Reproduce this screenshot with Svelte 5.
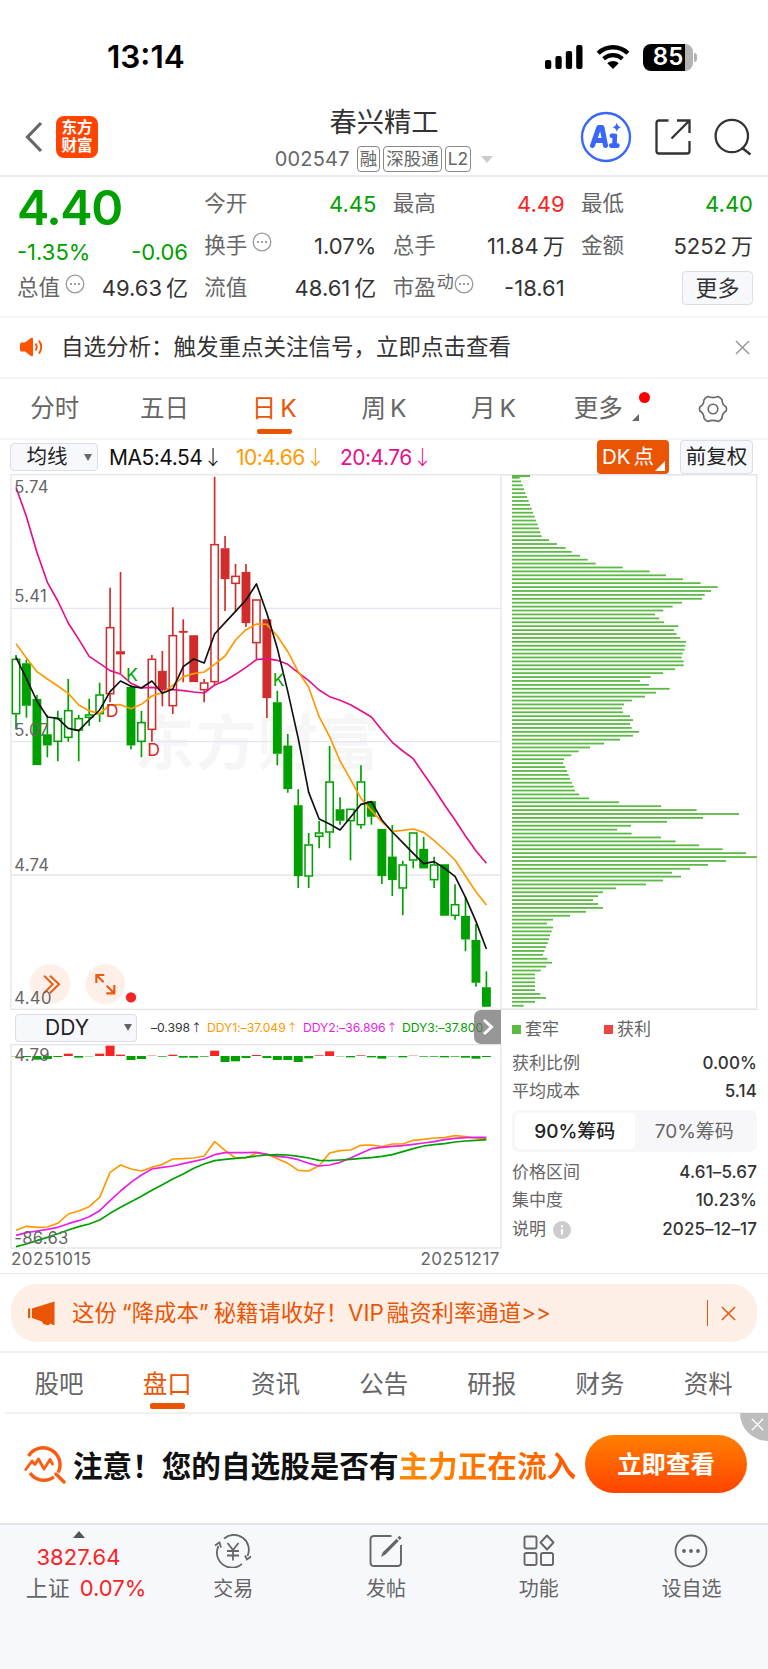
<script lang="ts">
  type Quote = { label: string; value: string; unit?: string; tone?: string; dots?: boolean; sup?: string };

  const quoteColumns: Quote[][] = [
    [
      { label: '今开', value: '4.45', tone: 'down' },
      { label: '换手', value: '1.07%', dots: true },
      { label: '流值', value: '48.61', unit: '亿' }
    ],
    [
      { label: '最高', value: '4.49', tone: 'up' },
      { label: '总手', value: '11.84', unit: '万' },
      { label: '市盈', value: '-18.61', dots: true, sup: '动' }
    ],
    [
      { label: '最低', value: '4.40', tone: 'down' },
      { label: '金额', value: '5252', unit: '万' }
    ]
  ];

  const periods = ['分时', '五日', '日K', '周K', '月K'];
  const sections = ['股吧', '盘口', '资讯', '公告', '研报', '财务', '资料'];

  // Chart units are thirds of a pixel: [high, body top, body bottom, low, type]
  // type: g = green, r = red, h = hollow, f = filled
  type Candle = [number, number, number, number, string];
  const candles: Candle[] = [
    [555, 566, 733, 778, 'gh'], [568, 580, 707, 743, 'gf'], [675, 687, 885, 885, 'gf'],
    [735, 793, 826, 862, 'gf'], [722, 744, 816, 874, 'gh'], [627, 720, 804, 815, 'gh'],
    [735, 744, 782, 874, 'gh'], [686, 733, 744, 768, 'gh'], [638, 673, 733, 756, 'gh'],
    [353, 471, 673, 697, 'rh'], [306, 544, 553, 610, 'rf'], [645, 651, 826, 838, 'gf'],
    [722, 756, 816, 862, 'gh'], [555, 566, 780, 815, 'rh'], [543, 603, 660, 709, 'rf'],
    [412, 495, 709, 732, 'rh'], [448, 483, 484, 637, 'rf'], [496, 496, 636, 636, 'rf'],
    [627, 637, 661, 697, 'rh'], [20, 222, 637, 645, 'rh'], [198, 235, 327, 423, 'rf'],
    [282, 317, 342, 423, 'rh'], [282, 306, 459, 471, 'rf'], [388, 388, 520, 568, 'rh'],
    [448, 448, 684, 744, 'rf'], [662, 697, 851, 886, 'gf'], [792, 827, 957, 968, 'gf'],
    [958, 1006, 1218, 1254, 'gf'], [1089, 1123, 1220, 1254, 'gh'], [1053, 1087, 1101, 1135, 'gh'],
    [828, 934, 1088, 1135, 'gh'], [982, 1018, 1052, 1064, 'gf'], [1016, 1016, 1054, 1171, 'gh'],
    [886, 934, 1066, 1076, 'gh'], [994, 994, 1040, 1064, 'gf'], [1077, 1077, 1218, 1242, 'gf'],
    [1065, 1160, 1230, 1278, 'gf'], [1172, 1183, 1256, 1336, 'gh'], [1087, 1087, 1172, 1195, 'gh'],
    [1101, 1137, 1195, 1195, 'gf'], [1160, 1183, 1231, 1254, 'gh'], [1183, 1183, 1337, 1337, 'gf'],
    [1243, 1302, 1338, 1349, 'gh'], [1280, 1338, 1408, 1444, 'gf'], [1362, 1410, 1538, 1550, 'gf'],
    [1504, 1552, 1610, 1610, 'gf']
  ];

  const ma5 = [562, 626, 693, 741, 745, 775, 782, 750, 720, 665, 633, 649, 654, 633, 670, 657, 590, 567, 579, 492, 458, 424, 390, 342, 430, 535, 665, 805, 967, 1047, 1062, 1080, 1042, 1003, 995, 1050, 1086, 1118, 1150, 1181, 1175, 1195, 1219, 1282, 1354, 1437];
  const ma10 = [521, 564, 605, 627, 648, 670, 705, 722, 731, 705, 704, 716, 703, 678, 668, 646, 620, 611, 606, 583, 558, 510, 479, 462, 463, 498, 545, 605, 652, 740, 800, 873, 928, 985, 1021, 1056, 1084, 1081, 1077, 1087, 1112, 1140, 1170, 1218, 1265, 1305];
  const ma20 = [52, 140, 247, 337, 393, 459, 508, 559, 580, 602, 612, 640, 654, 652, 657, 659, 662, 666, 669, 645, 632, 613, 592, 569, 566, 571, 583, 608, 632, 660, 680, 691, 704, 722, 741, 780, 817, 843, 866, 912, 957, 1005, 1050, 1098, 1142, 1180];

  const ddyBars = [-1, -3, -11, -9, -3, 7, -5, -1, 7, 31, 4, -12, -9, 1, -2, 4, -5, -5, -2, 16, -18, -16, -6, 3, -6, -12, -12, -18, -7, 2, 14, -1, -4, 2, -4, -8, -1, -4, 1, -2, -2, -4, -2, -5, -8, -3];
  const ddy1 = [661, 649, 652, 651, 640, 612, 603, 590, 562, 487, 465, 477, 483, 472, 463, 447, 446, 444, 438, 395, 421, 444, 444, 429, 433, 446, 460, 481, 483, 467, 429, 422, 420, 406, 405, 410, 402, 402, 391, 388, 384, 383, 377, 380, 384, 385];
  const ddy2 = [676, 668, 663, 658, 652, 641, 632, 620, 602, 572, 543, 517, 495, 477, 472, 468, 461, 454, 447, 434, 428, 428, 428, 427, 433, 439, 442, 449, 460, 468, 465, 457, 444, 430, 416, 412, 409, 407, 403, 399, 395, 389, 385, 383, 382, 382];
  const ddy3 = [710, 702, 692, 682, 671, 660, 650, 642, 630, 610, 592, 575, 559, 541, 524, 507, 492, 475, 462, 452, 448, 445, 442, 438, 435, 434, 435, 439, 444, 451, 452, 450, 448, 445, 443, 439, 434, 425, 416, 408, 404, 401, 396, 393, 391, 389];

  // Right end of each chip-distribution bar, top price first
  const chips = [
    63, 68, 72, 76, 81, 86, 90, 95, 99, 104, 108, 113, 117, 121, 125, 147, 171, 197, 215, 240, 263, 287, 368, 449,
    498, 549, 602, 653, 633, 614, 606, 546, 518, 490, 465, 478, 492, 535, 522, 530, 541, 558, 556, 554, 548, 545,
    551, 551, 525, 489, 452, 420, 447, 509, 468, 435, 396, 372, 366, 369, 390, 399, 390, 395, 417, 399, 360, 312,
    270, 236, 214, 192, 189, 196, 201, 206, 210, 216, 221, 225, 238, 267, 357, 483, 590, 717, 609, 501, 393, 351,
    395, 483, 527, 597, 668, 738, 771, 678, 624, 570, 516, 543, 489, 438, 348, 309, 294, 279, 294, 309, 258, 210,
    159, 141, 159, 155, 150, 147, 143, 138, 133, 129, 142, 156, 138, 122, 105, 105, 105, 105, 105, 121, 138, 105, 71
  ];
  const chipStep = (1607 - 34) / (chips.length - 1);

  const xAt = (i: number) => 48 + i * 31.36;
  const toPoints = (ys: number[]) => ys.map((y, i) => `${xAt(i).toFixed(1)},${y}`).join(' ');
  const candleColor = (type: string) => (type[0] === 'g' ? '#00a000' : '#d12c2c');
</script>

{#snippet dots()}
  <svg class="dots" viewBox="0 0 20 20" width="20" height="20">
    <circle cx="10" cy="10" r="8.8" fill="none" stroke="#999" stroke-width="1.3" />
    <circle cx="6" cy="10" r="1.1" fill="#888" />
    <circle cx="10" cy="10" r="1.1" fill="#888" />
    <circle cx="14" cy="10" r="1.1" fill="#888" />
  </svg>
{/snippet}

{#snippet cross(size: number, color: string)}
  <svg viewBox="0 0 16 16" width={size} height={size}>
    <path d="M1 1L15 15M15 1L1 15" stroke={color} stroke-width="1.6" fill="none" />
  </svg>
{/snippet}

<div class="page">
  <div class="status">
    <span class="time">13:14</span>
    <div class="signals">
      <svg width="38" height="24" viewBox="0 0 38 24">
        <rect x="0" y="15" width="6.3" height="9" rx="2" />
        <rect x="10.4" y="11" width="6.3" height="13" rx="2" />
        <rect x="20.8" y="6" width="6.3" height="18" rx="2" />
        <rect x="31.2" y="0" width="6.3" height="24" rx="2" />
      </svg>
      <svg class="wifi" width="34" height="24" viewBox="0 0 34 24">
        <path d="M2.2 8.2C10.4 .2 23.6 .2 31.8 8.2" fill="none" stroke="#000" stroke-width="4.4" />
        <path d="M7.6 13.8C13 8.8 21 8.8 26.4 13.8" fill="none" stroke="#000" stroke-width="4.2" />
        <path d="M11.3 18.2C14.5 15.3 19.5 15.3 22.7 18.2L17 24Z" />
      </svg>
      <div class="battery"><span>85</span></div>
      <div class="nub"></div>
    </div>
  </div>

  <header>
    <div class="header-left">
      <svg width="18" height="32" viewBox="0 0 18 32">
        <path d="M16 2L2.5 16L16 30" fill="none" stroke="#666" stroke-width="3.2" />
      </svg>
      <div class="logo"><span>东方</span><span>财富</span></div>
    </div>
    <div class="title">
      <h1>春兴精工</h1>
      <div class="code">
        <span class="number">002547</span>
        <span class="tag">融</span>
        <span class="tag">深股通</span>
        <span class="tag">L2</span>
        <svg width="12" height="7" viewBox="0 0 12 7"><path d="M0 0H12L6 7Z" fill="#ccc" /></svg>
      </div>
    </div>
    <div class="header-right">
      <svg width="52" height="52" viewBox="0 0 52 52">
        <circle cx="26" cy="26" r="24" fill="none" stroke="#3a66fb" stroke-width="2.4" />
        <path d="M12.5 34.5L18.8 16.5H22L25.5 34.5M15.5 29.5H24" fill="none" stroke="#3a66fb" stroke-width="5" stroke-linejoin="round" stroke-linecap="round" />
        <path d="M34.8 25.5L34.4 34.5M31.8 24.7H35M31.2 34.6H37.5" fill="none" stroke="#3a66fb" stroke-width="4.6" stroke-linecap="round" />
        <path d="M36.8 11.5Q37.4 15.6 41.4 16.2Q37.4 16.8 36.8 21Q36.2 16.8 32.2 16.2Q36.2 15.6 36.8 11.5Z" fill="#3a66fb" />
      </svg>
      <svg width="36" height="36" viewBox="0 0 36 36">
        <path d="M13.5 1.5H4Q1.5 1.5 1.5 4V32Q1.5 34.5 4 34.5H32Q34.5 34.5 34.5 32V22M22 1.5H34.5V14M34 2L16.5 19.5" fill="none" stroke="#333" stroke-width="2.3" />
      </svg>
      <svg width="38" height="38" viewBox="0 0 38 38">
        <circle cx="17.8" cy="18" r="16.2" fill="none" stroke="#333" stroke-width="2.3" />
        <path d="M27.5 29.5L36.5 36.5" stroke="#333" stroke-width="2.4" />
      </svg>
    </div>
  </header>

  <section class="quote">
    <div class="price">
      <div class="latest">4.40</div>
      <div class="change"><span>-1.35%</span><span>-0.06</span></div>
      <div class="cell short">
        <span class="label">总值{@render dots()}</span>
        <span>49.63<span class="unit">亿</span></span>
      </div>
    </div>
    {#each quoteColumns as column}
      <div class="column">
        {#each column as item}
          <div class="cell">
            <span class="label">
              {item.label}{#if item.sup}<sup>{item.sup}</sup>{/if}{#if item.dots}{@render dots()}{/if}
            </span>
            <span class={item.tone}>{item.value}{#if item.unit}<span class="unit">{item.unit}</span>{/if}</span>
          </div>
        {/each}
        {#if column.length < 3}
          <div class="cell last"><button class="more">更多</button></div>
        {/if}
      </div>
    {/each}
  </section>

  <section class="notice">
    <svg width="24" height="20" viewBox="0 0 24 20">
      <path d="M0 7Q0 5.5 1.5 5.5H5L11 1Q13 0 13 2V18Q13 20 11 19L5 14.5H1.5Q0 14.5 0 13Z" fill="#ff5200" />
      <path d="M15.5 6.5Q18 10 15.5 13.5M19 3.5Q23.5 10 19 16.5" fill="none" stroke="#ff5200" stroke-width="1.9" />
    </svg>
    <p>自选分析：触发重点关注信号，立即点击查看</p>
    {@render cross(15, '#999')}
  </section>

  <nav class="periods">
    {#each periods as period}
      <div class="period" class:active={period === '日K'}>
        {period[0]}<span class:latin={period[1] === 'K'}>{period[1]}</span>
      </div>
    {/each}
    <div class="period with-dot">
      更多
      <svg class="corner" width="7" height="7" viewBox="0 0 7 7"><path d="M7 0V7H0Z" fill="#666" /></svg>
      <i class="badge"></i>
    </div>
    <div class="period gear">
      <svg width="30" height="28" viewBox="0 0 30 28">
        <path d="M9.8 1.6Q15 3.6 20.2 1.6Q22.4 2.6 24 4.8Q24.2 10 28.2 12Q28.9 14 28.2 16Q24.2 18 24 23.2Q22.4 25.4 20.2 26.4Q15 24.4 9.8 26.4Q7.6 25.4 6 23.2Q5.8 18 1.8 16Q1.1 14 1.8 12Q5.8 10 6 4.8Q7.6 2.6 9.8 1.6Z" fill="none" stroke="#666" stroke-width="1.6" />
        <circle cx="15" cy="14" r="4.8" fill="none" stroke="#666" stroke-width="1.6" />
      </svg>
    </div>
  </nav>

  <div class="ma-bar">
    <div class="select ma-select"><span>均线</span><i class="caret"></i></div>
    <span class="ma ma5">MA5:4.54<em>↓</em></span>
    <span class="ma ma10">10:4.66<em>↓</em></span>
    <span class="ma ma20">20:4.76<em>↓</em></span>
    <div class="dk">DK<b>点</b><i></i></div>
    <div class="select adjust">前复权</div>
  </div>

  <main>
    <div class="left">
      <svg class="kline" width="492" height="536" viewBox="30 12 1476 1608">
        <text class="watermark" x="402" y="886">东方财富</text>
        <path d="M33 415H1503M33 815H1503M33 1215H1503" stroke="#e4e5f0" stroke-width="4" />
        <rect x="33" y="14" width="1470" height="1604" fill="none" stroke="#e6e6ea" stroke-width="4" />
        {#each candles as [high, top, bottom, low, type], i}
          {@const color = candleColor(type)}
          <path d="M{xAt(i)} {high}V{top}M{xAt(i)} {bottom}V{low}" stroke={color} stroke-width="5" />
          <rect
            x={xAt(i) - 11}
            y={top + 2}
            width="22"
            height={Math.max(bottom - top - 4, 1)}
            fill={type[1] === 'f' ? color : '#fff'}
            stroke={color}
            stroke-width="4.6"
          />
        {/each}
        <polyline points={toPoints(ma20)} stroke="#e5108a" />
        <polyline points={toPoints(ma10)} stroke="#ff9900" />
        <polyline points={toPoints(ma5)} stroke="#111" />
        <g class="signal">
          <text x="396" y="634" fill="#00a000">K</text>
          <text x="836" y="649" fill="#00a000">K</text>
          <text x="336" y="742" fill="#d12c2c">D</text>
          <text x="461" y="858" fill="#d12c2c">D</text>
        </g>
        <circle cx="150" cy="1542" r="60" fill="#fef0e9" />
        <circle cx="316" cy="1542" r="60" fill="#fef0e9" />
        <path d="M132 1517L158 1543L132 1569M150 1517L177 1543L150 1569" fill="none" stroke="#ee5a10" stroke-width="6" />
        <path d="M289 1539V1515H313M290 1516L311 1537M343 1545V1570H319M342 1569L320 1547" fill="none" stroke="#ee5a10" stroke-width="6.5" />
        <circle cx="393" cy="1582" r="15.5" fill="#f82424" />
        <g class="axis">
          <text x="43" y="68">5.74</text>
          <text x="43" y="396">5.41</text>
          <text x="43" y="797">5.07</text>
          <text x="43" y="1202">4.74</text>
          <text x="43" y="1602">4.40</text>
        </g>
      </svg>

      <div class="ddy-bar">
        <div class="select ddy-select"><span>DDY</span><i class="caret"></i></div>
        <span class="v0">–0.398<em>↑</em></span>
        <span class="v1">DDY1:–37.049<em>↑</em></span>
        <span class="v2">DDY2:–36.896<em>↑</em></span>
        <span class="v3">DDY3:–37.800</span>
        <button class="next" aria-label="下一项">
          <svg width="12" height="18" viewBox="0 0 12 18"><path d="M2 2L9.5 9L2 16" fill="none" stroke="#fff" stroke-width="3" /></svg>
        </button>
      </div>

      <svg class="ddy" width="492" height="205" viewBox="30 102 1476 615">
        <rect x="33" y="104" width="1470" height="610" fill="none" stroke="#e4e4e8" stroke-width="4" />
        {#each ddyBars as value, i}
          <rect
            x={xAt(i) - 13.5}
            y={value > 0 ? 138 - value : 138}
            width="27"
            height={Math.abs(value)}
            fill={value > 0 ? '#f82424' : '#00a000'}
          />
        {/each}
        <polyline points={toPoints(ddy1)} stroke="#ff9900" />
        <polyline points={toPoints(ddy2)} stroke="#e91eea" />
        <polyline points={toPoints(ddy3)} stroke="#00a000" />
        <g class="axis">
          <text x="43" y="154">4.79</text>
          <text x="43" y="702">-86.63</text>
        </g>
      </svg>
      <div class="dates"><span>20251015</span><span>20251217</span></div>
    </div>

    <aside>
      <svg class="chips" width="258" height="536" viewBox="0 12 774 1608">
        <path d="M0 14H770V1618H0" fill="none" stroke="#e4e4ea" stroke-width="4.5" />
        <rect x="36" y="15" width="54" height="6" fill="#5bba43" />
        <rect x="36" y="21" width="23" height="5" fill="#5bba43" />
        {#each chips as end, i}
          <rect x="36" y={31.5 + i * chipStep} width={end - 36} height="5.4" fill="#5bba43" />
        {/each}
      </svg>
      <div class="info">
        <div class="legend">
          <span><i class="lock"></i>套牢</span>
          <span><i class="gain"></i>获利</span>
        </div>
        <div class="info-row"><span>获利比例</span><b>0.00%</b></div>
        <div class="info-row"><span>平均成本</span><b>5.14</b></div>
        <div class="toggle">
          <div class="on">90%筹码</div>
          <div>70%筹码</div>
        </div>
        <div class="info-row"><span>价格区间</span><b>4.61–5.67</b></div>
        <div class="info-row"><span>集中度</span><b>10.23%</b></div>
        <div class="info-row tall">
          <span>说明
            <svg width="18" height="18" viewBox="0 0 18 18">
              <circle cx="9" cy="9" r="9" fill="#ccc" />
              <path d="M9 8V13.5M9 4.2V6.4" stroke="#fff" stroke-width="2.2" />
            </svg>
          </span>
          <b>2025–12–17</b>
        </div>
      </div>
    </aside>
  </main>

  <section class="promo">
    <div class="pill">
      <svg width="28" height="25" viewBox="0 0 28 25">
        <path d="M0 7.5H2.2V17H0ZM4 7.5L26.5 .5V24.5L22 22.5Q21 25.5 17.5 23.5Q15 24 14 20.5L4 17Z" fill="#ea5504" />
      </svg>
      <p>这份<q>“</q>降成本<q class="close">”</q>秘籍请收好！<span>VIP</span>融资利率通道&gt;&gt;</p>
      <i class="divider"></i>
      {@render cross(15, '#ea5504')}
    </div>
  </section>

  <nav class="sections">
    {#each sections as name}
      <div class="section-tab" class:active={name === '盘口'}>{name}</div>
    {/each}
  </nav>

  <section class="ad">
    <svg width="42" height="40" viewBox="0 0 42 40">
      <path d="M4.5 12A17 17 0 0 1 34.2 28.5M30 33A17 17 0 0 1 6 29" fill="none" stroke="#ff5a10" stroke-width="3.4" />
      <path d="M1.8 25.5L8 17L11 20.5L14.5 15L20 25L26 15.5L28.5 20" fill="none" stroke="#ff5a10" stroke-width="2.8" stroke-linecap="round" stroke-linejoin="round" />
      <path d="M32 30L40 38" stroke="#ff5a10" stroke-width="3.4" stroke-linecap="round" />
    </svg>
    <p>注意！您的自选股是否有<span>主力正在流入</span></p>
    <button class="cta">立即查看</button>
    <div class="dismiss">{@render cross(13, '#fff')}</div>
  </section>

  <footer>
    <div class="index">
      <svg width="12" height="7" viewBox="0 0 12 7"><path d="M0 7L6 0L12 7Z" fill="#555" /></svg>
      <strong>3827.64</strong>
      <div><span>上证</span><strong>0.07%</strong></div>
    </div>
    <div class="action">
      <svg width="38" height="34" viewBox="0 0 38 34">
        <path d="M10 4.5A15 15 0 0 1 33.5 22M28 29.8A15 15 0 0 1 4.5 12M1 11.5L5.5 8.5L7 13.5M31 21.5L33 25.5L37 22.5" fill="none" stroke="#666" stroke-width="1.8" />
        <path d="M13.5 9L19 16L24.5 9M19 16V26.5M13 17H25M13 21.5H25" fill="none" stroke="#666" stroke-width="1.8" />
      </svg>
      交易
    </div>
    <div class="action">
      <svg width="34" height="34" viewBox="0 0 34 34">
        <path d="M22.5 2H5Q1.5 2 1.5 5.5V28.5Q1.5 32 5 32H28.5Q32 32 32 28.5V11" fill="none" stroke="#666" stroke-width="1.9" />
        <path d="M12 23L13.8 18.2L27.5 4.8L29.8 7L16.5 20.5ZM28.4 3.8L30.4 1.8L32.6 4L30.7 6Z" fill="#666" />
      </svg>
      发帖
    </div>
    <div class="action">
      <svg width="32" height="34" viewBox="0 0 32 34">
        <g fill="none" stroke="#666" stroke-width="1.9">
          <rect x="1.5" y="2.5" width="12" height="12" rx="1.8" />
          <rect x="1.5" y="19" width="12" height="12" rx="1.8" />
          <rect x="18" y="19" width="12" height="12" rx="1.8" />
          <path d="M24 1.5L30.5 8.5L24 15.5L17.5 8.5Z" stroke-linejoin="round" />
        </g>
      </svg>
      功能
    </div>
    <div class="action">
      <svg width="34" height="34" viewBox="0 0 34 34">
        <circle cx="17" cy="17" r="15.5" fill="none" stroke="#666" stroke-width="1.8" />
        <circle cx="10" cy="17" r="1.9" fill="#666" />
        <circle cx="17" cy="17" r="1.9" fill="#666" />
        <circle cx="24" cy="17" r="1.9" fill="#666" />
      </svg>
      设自选
    </div>
  </footer>
</div>

<style>
  :global(body) {
    margin: 0;
    background: #fff;
  }
  .page {
    width: 768px;
    height: 1669px;
    display: flex;
    flex-direction: column;
    overflow: hidden;
    background: #fff;
    color: #333;
    font-family: Inter, "Noto Sans CJK SC", sans-serif;
    font-size: 22px;
    line-height: 1;
    white-space: nowrap;
  }
  .page * {
    box-sizing: border-box;
  }
  svg {
    flex-shrink: 0;
    display: block;
  }
  p, h1 {
    margin: 0;
    font-weight: 400;
  }
  button {
    border: 0;
    padding: 0;
    font: inherit;
    color: inherit;
  }
  em, i {
    font-style: normal;
  }
  .up {
    color: #f82424;
  }
  .down {
    color: #00a000;
  }

  .status {
    height: 98px;
    padding: 16px 71px 0 107px;
    display: flex;
    align-items: center;
    justify-content: space-between;
    color: #000;
  }
  .time {
    font-size: 31.5px;
    font-weight: 600;
    letter-spacing: 0;
  }
  .signals {
    display: flex;
    align-items: center;
  }
  .wifi {
    margin: 0 13px;
  }
  .battery {
    width: 50px;
    height: 27px;
    border-radius: 8px;
    background: linear-gradient(90deg, #000 84%, #b3b3b3 84%);
    color: #fff;
    font-size: 24px;
    font-weight: 600;
    display: flex;
    align-items: center;
    justify-content: center;
  }
  .nub {
    width: 3px;
    height: 9px;
    margin-left: 1px;
    border-radius: 0 3px 3px 0;
    background: #b3b3b3;
  }

  header {
    height: 79px;
    display: grid;
    grid-template-columns: 250px 1fr 250px;
    border-bottom: 2px solid #ededed;
  }
  .header-left {
    display: flex;
    align-items: center;
    padding-left: 25px;
    gap: 13px;
  }
  .logo {
    width: 42px;
    height: 42px;
    border-radius: 8px;
    background: #ff4400;
    color: #fff;
    font-size: 15.5px;
    font-weight: 700;
    display: flex;
    flex-direction: column;
    align-items: center;
    justify-content: center;
    gap: 2px;
  }
  .title {
    display: flex;
    flex-direction: column;
    align-items: center;
    padding-top: 11px;
  }
  h1 {
    font-size: 27.3px;
    line-height: 28px;
  }
  .code {
    display: flex;
    align-items: center;
    margin-top: 9px;
    height: 26px;
    color: #666;
  }
  .number {
    font-size: 20px;
    letter-spacing: 0.2px;
    margin-right: 7px;
  }
  .tag {
    height: 26px;
    padding: 0 2px;
    margin-right: 3px;
    border: 1.5px solid #888;
    border-radius: 4px;
    font-size: 17.5px;
    line-height: 23px;
  }
  .code svg {
    margin-left: 7px;
  }
  .header-right {
    display: flex;
    align-items: center;
    justify-content: flex-end;
    gap: 23px;
    padding-right: 16px;
  }

  .quote {
    height: 141px;
    padding: 6px 15px 0 17px;
    display: grid;
    grid-template-columns: 171px 172px 172px 172px;
    justify-content: space-between;
    border-bottom: 2px solid #f5f5f5;
  }
  .latest {
    height: 51px;
    line-height: 49px;
    font-size: 48.5px;
    font-weight: 600;
    letter-spacing: -1.4px;
    color: #00a000;
  }
  .change {
    height: 36px;
    display: flex;
    align-items: center;
    justify-content: space-between;
    color: #00a000;
  }
  .cell {
    height: 42px;
    display: flex;
    align-items: center;
    justify-content: space-between;
  }
  .cell.short {
    height: 36px;
  }
  .cell.last {
    justify-content: flex-end;
  }
  .label {
    display: flex;
    align-items: center;
    color: #666;
    font-size: 21.5px;
  }
  .unit {
    margin-left: 4px;
  }
  .dots {
    margin: -9px 0 0 5px;
  }
  sup {
    font-size: 17px;
    line-height: 16px;
    margin-top: -12px;
    margin-left: 1px;
    vertical-align: baseline;
  }
  sup + .dots {
    margin-left: 0;
  }
  .more {
    width: 71px;
    height: 34px;
    border: 1.5px solid #dcdde6;
    border-radius: 4px;
    background: #f7f8fb;
    color: #333;
  }

  .notice {
    height: 61px;
    padding: 0 18px 1px 20px;
    display: flex;
    align-items: center;
    border-bottom: 2px solid #f6f6f6;
  }
  .notice p {
    flex: 1;
    margin-left: 17px;
    font-size: 22.5px;
  }

  .periods {
    height: 61px;
    display: grid;
    grid-template-columns: repeat(7, 109.7px);
    border-bottom: 2px solid #f5f5f5;
    color: #666;
    font-size: 24.5px;
  }
  .period {
    position: relative;
    display: flex;
    align-items: center;
    justify-content: center;
  }
  .latin {
    margin-left: 4px;
  }
  .period.active, .section-tab.active {
    color: #ea5504;
  }
  .period.active::after, .section-tab.active::after {
    content: "";
    position: absolute;
    bottom: 4px;
    width: 35px;
    height: 5px;
    border-radius: 2px;
    background: #ea5504;
  }
  .with-dot {
    padding-left: 6px;
  }
  .corner {
    margin: 18px 0 0 9px;
  }
  .badge {
    position: absolute;
    left: 91px;
    top: 13px;
    width: 11px;
    height: 11px;
    border-radius: 50%;
    background: #ff0000;
  }

  .ma-bar {
    height: 34px;
    display: flex;
    align-items: center;
    padding: 0 15px 0 10px;
  }
  .select {
    display: flex;
    align-items: center;
    justify-content: center;
    border: 1.5px solid #dcdde6;
    border-radius: 4px;
    background: #f7f8fb;
    color: #222;
  }
  .caret {
    border: 4.5px solid transparent;
    border-top: 7px solid #666;
    border-bottom: 0;
  }
  .ma-select {
    width: 88px;
    height: 28px;
    font-size: 20.5px;
    gap: 16px;
    padding-left: 10px;
    margin-right: 11px;
  }
  .ma {
    display: flex;
    align-items: center;
    font-size: 21px;
    letter-spacing: -0.5px;
  }
  .ma em {
    width: 21px;
    font-size: 20px;
    text-align: center;
    font-family: "Noto Sans CJK SC", sans-serif;
    font-weight: 300;
  }
  .ma5 {
    width: 127px;
    color: #111;
  }
  .ma10 {
    width: 104px;
    color: #ff9900;
  }
  .ma20 {
    color: #e5108a;
  }
  .dk {
    position: relative;
    width: 72px;
    height: 34px;
    margin-left: auto;
    margin-right: 11px;
    padding-left: 5px;
    display: flex;
    align-items: center;
    gap: 3px;
    border-radius: 4px;
    background: #ea5504;
    color: #fff;
    font-size: 20.5px;
  }
  .dk b {
    font-weight: 400;
  }
  .dk i {
    position: absolute;
    right: 4px;
    bottom: 3px;
    border-left: 10px solid transparent;
    border-bottom: 10px solid #fff;
  }
  .adjust {
    width: 73px;
    height: 34px;
    font-size: 20.5px;
  }

  main {
    height: 800px;
    display: flex;
    padding-left: 10px;
    border-bottom: 1.5px solid #e8e8e8;
  }
  .left {
    width: 490px;
  }
  .kline, .ddy {
    overflow: visible;
  }
  .kline polyline, .ddy polyline {
    fill: none;
    stroke-width: 5;
    stroke-linejoin: round;
  }
  .watermark {
    font-size: 182px;
    font-weight: 700;
    letter-spacing: 3px;
    fill: #f6f6f6;
  }
  .axis {
    font-size: 50px;
    letter-spacing: 0.8px;
    fill: #666;
  }
  .signal {
    font-size: 53px;
    text-anchor: middle;
  }
  .ddy-bar {
    position: relative;
    height: 34px;
    display: flex;
    align-items: center;
    padding-left: 5px;
    font-size: 12.2px;
  }
  .ddy-bar > span {
    letter-spacing: -0.05px;
    padding-top: 2px;
  }
  .ddy-select {
    width: 122px;
    height: 28px;
    margin: 1px 14px 0 0;
    padding-left: 25px;
    gap: 35px;
    font-size: 21px;
  }
  .ddy-bar em {
    font-size: 11px;
    margin-left: 1px;
    font-family: "Noto Sans CJK SC", sans-serif;
  }
  .v0 {
    width: 56px;
  }
  .v1 {
    width: 96px;
    color: #ff9900;
  }
  .v2 {
    width: 99px;
    color: #e91eea;
  }
  .v3 {
    color: #00a000;
  }
  .next {
    position: absolute;
    left: 464px;
    top: 0;
    width: 27px;
    height: 34px;
    display: flex;
    align-items: center;
    justify-content: center;
    border-radius: 7px 0 0 7px;
    background: rgba(110, 110, 110, 0.72);
  }
  .dates {
    display: flex;
    justify-content: space-between;
    padding: 2px 0 0 1px;
    font-size: 17px;
    letter-spacing: 0.5px;
    color: #666;
  }
  .info {
    width: 245px;
    margin-left: 12px;
    font-size: 17px;
    color: #666;
  }
  .legend {
    height: 39px;
    display: flex;
    align-items: center;
  }
  .legend span {
    width: 92px;
    display: flex;
    align-items: center;
    gap: 4px;
  }
  .legend i {
    width: 9px;
    height: 9px;
  }
  .lock {
    background: #5bba43;
  }
  .gain {
    background: #ee4444;
  }
  .info-row {
    height: 28px;
    display: flex;
    align-items: center;
    justify-content: space-between;
  }
  .info-row.tall {
    height: 31px;
  }
  .info-row span {
    display: flex;
    gap: 7px;
    align-items: center;
  }
  .info-row b {
    color: #333;
    font-weight: 500;
    letter-spacing: 0.1px;
  }
  .toggle {
    height: 42px;
    margin: 5px 0 6px;
    padding: 3px;
    display: grid;
    grid-template-columns: 1fr 1fr;
    border-radius: 7px;
    background: #f7f7fa;
    font-size: 19px;
  }
  .toggle div {
    display: flex;
    align-items: center;
    justify-content: center;
    border-radius: 5px;
  }
  .toggle .on {
    background: #fff;
    color: #222;
    font-weight: 500;
  }

  .promo {
    height: 79px;
    padding: 10px 11px 0;
    border-bottom: 2px solid #f0f0f0;
  }
  .pill {
    height: 58px;
    display: flex;
    align-items: center;
    padding: 0 21px 0 17px;
    border-radius: 26px;
    background: #fdeee6;
    color: #ea5504;
  }
  .pill p {
    flex: 1;
    margin-left: 16px;
    font-size: 22.4px;
  }
  .pill q {
    quotes: none;
    margin-left: 5px;
  }
  .pill q.close {
    margin: 0 5px 0 0;
  }
  .pill p span {
    margin-right: 3px;
  }
  .divider {
    width: 1.5px;
    height: 26px;
    margin-right: 13px;
    background: #ea5504;
  }

  .sections {
    height: 61px;
    margin-left: 5px;
    display: grid;
    grid-template-columns: repeat(7, 108.2px);
    border-bottom: 2px solid #f0f0f0;
    color: #666;
    font-size: 24.5px;
  }
  .section-tab {
    position: relative;
    display: flex;
    align-items: center;
    justify-content: center;
    padding-top: 3px;
  }
  .section-tab.active::after {
    bottom: 3px;
    height: 6px;
  }

  .ad {
    position: relative;
    height: 109px;
    display: flex;
    align-items: center;
    padding: 0 21px 9px 24px;
  }
  .ad p {
    flex: 1;
    margin: 5px 0 0 7px;
    font-size: 29.6px;
    font-weight: 700;
    color: #111;
  }
  .ad p span {
    background: linear-gradient(90deg, #ff8a00, #ff5a00);
    background-clip: text;
    color: transparent;
  }
  .cta {
    width: 162px;
    height: 58px;
    border-radius: 29px;
    background: linear-gradient(#ff8000, #ff4400);
    color: #fff;
    font-size: 24.4px;
    font-weight: 700;
  }
  .dismiss {
    position: absolute;
    top: -1px;
    right: 0;
    width: 28px;
    height: 28px;
    padding: 5px 0 0 11px;
    border-radius: 0 0 0 28px;
    background: #bdbdbd;
  }

  footer {
    flex: 1;
    display: grid;
    grid-template-columns: 157px repeat(4, 152.7px);
    border-top: 2px solid #e5e5e8;
    background: #f7f8fb;
    color: #666;
    font-size: 20px;
  }
  .index {
    display: flex;
    flex-direction: column;
    align-items: center;
    padding: 6px 0 0;
    font-size: 22px;
  }
  .index strong {
    color: #f82424;
    font-weight: 400;
    margin-top: 8px;
  }
  .index div {
    display: flex;
    align-items: center;
    gap: 10px;
    margin: 9px 0 0 15px;
  }
  .index div strong {
    margin: 0;
  }
  .action {
    display: flex;
    flex-direction: column;
    align-items: center;
    padding-top: 9px;
    gap: 11px;
  }
</style>
